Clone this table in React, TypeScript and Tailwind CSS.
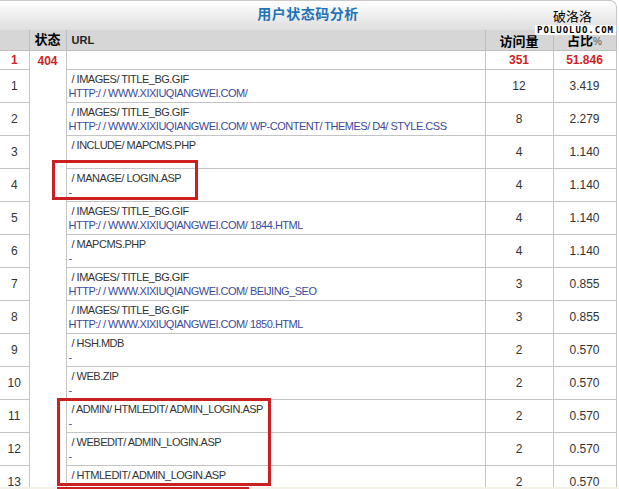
import React from "react";

type Row = { n: number; path: string; ref: string; hits: number; pct: string };

const ROWS: Row[] = [
  { n: 1, path: "/ IMAGES/ TITLE_BG.GIF", ref: "HTTP:/ / WWW.XIXIUQIANGWEI.COM/", hits: 12, pct: "3.419" },
  { n: 2, path: "/ IMAGES/ TITLE_BG.GIF", ref: "HTTP:/ / WWW.XIXIUQIANGWEI.COM/ WP-CONTENT/ THEMES/ D4/ STYLE.CSS", hits: 8, pct: "2.279" },
  { n: 3, path: "/ INCLUDE/ MAPCMS.PHP", ref: "", hits: 4, pct: "1.140" },
  { n: 4, path: "/ MANAGE/ LOGIN.ASP", ref: "-", hits: 4, pct: "1.140" },
  { n: 5, path: "/ IMAGES/ TITLE_BG.GIF", ref: "HTTP:/ / WWW.XIXIUQIANGWEI.COM/ 1844.HTML", hits: 4, pct: "1.140" },
  { n: 6, path: "/ MAPCMS.PHP", ref: "-", hits: 4, pct: "1.140" },
  { n: 7, path: "/ IMAGES/ TITLE_BG.GIF", ref: "HTTP:/ / WWW.XIXIUQIANGWEI.COM/ BEIJING_SEO", hits: 3, pct: "0.855" },
  { n: 8, path: "/ IMAGES/ TITLE_BG.GIF", ref: "HTTP:/ / WWW.XIXIUQIANGWEI.COM/ 1850.HTML", hits: 3, pct: "0.855" },
  { n: 9, path: "/ HSH.MDB", ref: "-", hits: 2, pct: "0.570" },
  { n: 10, path: "/ WEB.ZIP", ref: "-", hits: 2, pct: "0.570" },
  { n: 11, path: "/ ADMIN/ HTMLEDIT/ ADMIN_LOGIN.ASP", ref: "-", hits: 2, pct: "0.570" },
  { n: 12, path: "/ WEBEDIT/ ADMIN_LOGIN.ASP", ref: "-", hits: 2, pct: "0.570" },
  { n: 13, path: "/ HTMLEDIT/ ADMIN_LOGIN.ASP", ref: "-", hits: 2, pct: "0.570" },
];

const FONT = { fontFamily: '"Liberation Sans", Arial, "Noto Sans CJK SC", sans-serif' };

export default function App() {
  return (
    <div className="relative w-[619px] h-[489px] overflow-hidden bg-white text-[#333]" style={FONT}>
      {/* title bar */}
      <div className="w-[617px] h-[30px] rounded-tr-[7px] border-t border-r border-[#c8c8c8] bg-gradient-to-b from-white to-[#dedede] flex items-center justify-center">
        <span className="text-[14px] font-bold text-[#1f73b7] tracking-[0.5px] -mt-[2px]">用户状态码分析</span>
      </div>

      <table className="w-[616px] table-fixed border-collapse text-[11px] tracking-[-0.5px]">
        <colgroup>
          <col className="w-[29px]" />
          <col className="w-[37px]" />
          <col className="w-[419px]" />
          <col className="w-[68px]" />
          <col className="w-[63px]" />
        </colgroup>
        <thead>
          <tr className="h-[20px] bg-[#d6d6d6] leading-[16px]">
            <th className="border-r border-b border-[#bdbdbd]"></th>
            <th className="border-r border-b border-[#bdbdbd] text-[13px] font-bold text-black tracking-normal">状态</th>
            <th className="border-r border-b border-[#bdbdbd] text-left pl-[5px] text-[11px] font-bold text-[#222] tracking-normal">URL</th>
            <th className="border-r border-b border-[#bdbdbd] text-[13px] font-bold text-black tracking-normal align-bottom">访问量</th>
            <th className="border-r border-b border-[#bdbdbd] text-[13px] font-bold text-black tracking-normal align-bottom">
              占比<span className="text-[10px] font-normal text-[#555]">%</span>
            </th>
          </tr>
        </thead>
        <tbody>
          <tr className="h-[19px] text-[#d11f1f] font-bold text-[12px] tracking-normal">
            <td className="border-r border-b border-[#c4c4c4] text-center">1</td>
            <td rowSpan={14} className="border-r border-[#c4c4c4] text-center align-top pt-[1px]">404</td>
            <td className="border-r border-b border-[#c4c4c4]"></td>
            <td className="border-r border-b border-[#c4c4c4] text-center">351</td>
            <td className="border-r border-b border-[#c4c4c4] text-center">51.846</td>
          </tr>
          {ROWS.map((r) => (
            <tr key={r.n} className="h-[33px]">
              <td className="border-r border-b border-[#c4c4c4] text-center text-[12px] tracking-normal">{r.n}</td>
              <td className="border-r border-b border-[#c4c4c4] pl-[2px] align-middle">
                <div className="leading-[14px] pl-[3px] text-[#333]">{r.path}</div>
                <div className="leading-[14px] text-[#3b4a9c] h-[14px]">{r.ref}</div>
              </td>
              <td className="border-r border-b border-[#c4c4c4] text-center text-[12px] tracking-normal">{r.hits}</td>
              <td className="border-r border-b border-[#c4c4c4] text-center text-[12px] tracking-normal">{r.pct}</td>
            </tr>
          ))}
        </tbody>
      </table>

      {/* watermark */}
      <div className="absolute left-[553px] top-[8px] text-[13px] leading-[15px] text-black" style={{ fontFamily: '"Noto Sans CJK SC", sans-serif' }}>
        破洛洛
      </div>
      <div className="absolute left-[535px] top-[25px] h-[10px] px-[2px] bg-white flex items-center text-[9px] font-bold leading-none tracking-[1px] text-black" style={{ fontFamily: '"DejaVu Sans Mono", monospace' }}>
        POLUOLUO.COM
      </div>

      {/* annotations */}
      <div className="absolute left-[52px] top-[160px] w-[146px] h-[40px] border-[3px] border-[#cc1f1f]"></div>
      <div className="absolute left-[57px] top-[398px] w-[214px] h-[88px] border-[3px] border-[#cc1f1f]"></div>
      <div className="absolute left-0 top-[487px] w-[619px] h-[2px] bg-[#f4f2e8]"></div>
      <div className="absolute left-[57px] top-[487px] w-[192px] h-[2px] bg-[#cc1f1f]"></div>
    </div>
  );
}
